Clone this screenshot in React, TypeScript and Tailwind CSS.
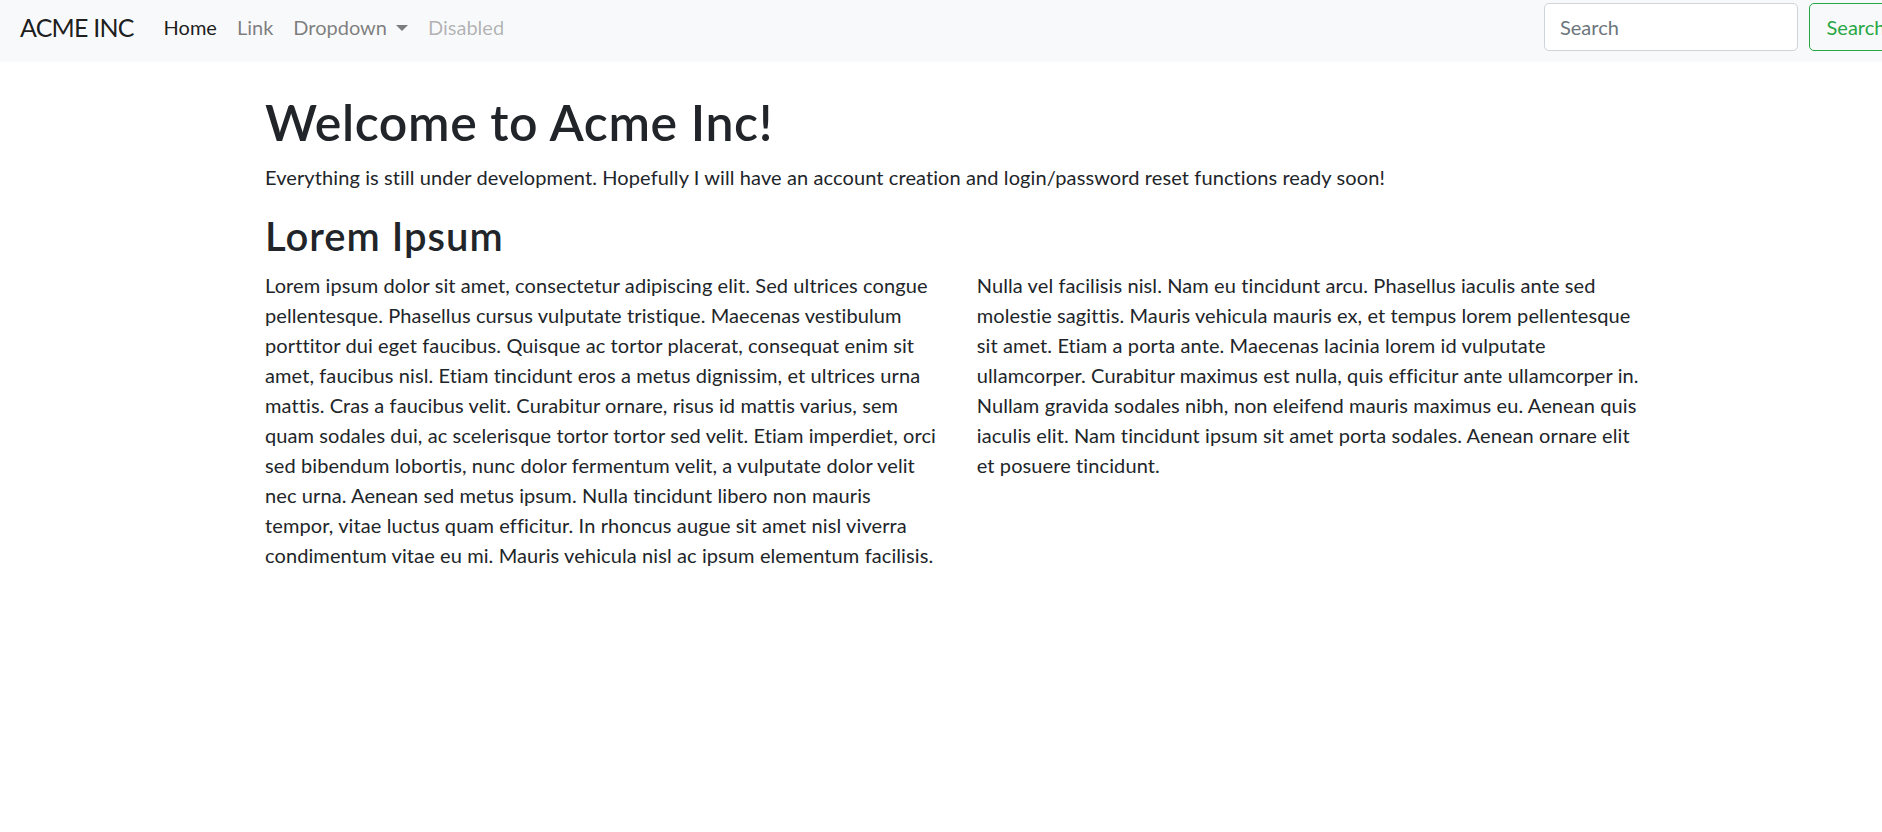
import React from "react";

const LEFT = [
  "Lorem ipsum dolor sit amet, consectetur adipiscing elit. Sed ultrices congue",
  "pellentesque. Phasellus cursus vulputate tristique. Maecenas vestibulum",
  "porttitor dui eget faucibus. Quisque ac tortor placerat, consequat enim sit",
  "amet, faucibus nisl. Etiam tincidunt eros a metus dignissim, et ultrices urna",
  "mattis. Cras a faucibus velit. Curabitur ornare, risus id mattis varius, sem",
  "quam sodales dui, ac scelerisque tortor tortor sed velit. Etiam imperdiet, orci",
  "sed bibendum lobortis, nunc dolor fermentum velit, a vulputate dolor velit",
  "nec urna. Aenean sed metus ipsum. Nulla tincidunt libero non mauris",
  "tempor, vitae luctus quam efficitur. In rhoncus augue sit amet nisl viverra",
  "condimentum vitae eu mi. Mauris vehicula nisl ac ipsum elementum facilisis.",
];

const RIGHT = [
  "Nulla vel facilisis nisl. Nam eu tincidunt arcu. Phasellus iaculis ante sed",
  "molestie sagittis. Mauris vehicula mauris ex, et tempus lorem pellentesque",
  "sit amet. Etiam a porta ante. Maecenas lacinia lorem id vulputate",
  "ullamcorper. Curabitur maximus est nulla, quis efficitur ante ullamcorper in.",
  "Nullam gravida sodales nibh, non eleifend mauris maximus eu. Aenean quis",
  "iaculis elit. Nam tincidunt ipsum sit amet porta sodales. Aenean ornare elit",
  "et posuere tincidunt.",
];

function Lines({ lines }: { lines: string[] }) {
  return (
    <p className="whitespace-nowrap">
      {lines.map((l, i) => (
        <React.Fragment key={i}>
          {l}
          {i < lines.length - 1 && <br />}
        </React.Fragment>
      ))}
    </p>
  );
}

export default function App() {
  return (
    <div className="min-h-screen w-full overflow-hidden bg-white text-[#212529] font-['Lato',sans-serif] [font-variant-ligatures:none]">
      <div className="w-[1916px]">
        <nav className="flex h-[62px] items-start bg-[#f8f9fa] pl-[20px] pr-[13px]">
          <a className="mt-[9px] mr-[20px] text-[25px] leading-[37.5px] tracking-[-0.8px] text-black/90">ACME INC</a>
          <ul className="mt-[12px] flex text-[20px] leading-[30px]">
            <li>
              <a className="block px-[10px] text-black/90">Home</a>
            </li>
            <li>
              <a className="block px-[10px] text-black/50">Link</a>
            </li>
            <li>
              <a className="flex items-center px-[10px] text-black/50">
                Dropdown
                <span className="ml-[9px] mt-[1px] h-0 w-0 border-x-[6px] border-t-[6px] border-x-transparent border-t-black/50" />
              </a>
            </li>
            <li>
              <a className="block px-[10px] text-black/30">Disabled</a>
            </li>
          </ul>
          <form className="ml-auto mt-[3px] flex">
            <input
              placeholder="Search"
              className="mr-[11px] h-[47.5px] w-[254px] rounded-[5px] border border-[#ced4da] bg-white px-[15px] text-[20px] text-[#495057] outline-none placeholder:text-[#6c757d]"
            />
            <button
              type="button"
              className="h-[47.5px] w-[94px] rounded-[5px] border border-[#28a745] text-[20px] text-[#28a745]"
            >
              Search
            </button>
          </form>
        </nav>

        <main className="mx-auto mt-[30px] w-[1425px] px-[19.5px]">
          <h1 className="mb-[10px] text-[50px] font-semibold leading-[60px] tracking-[0.6px]">Welcome to Acme Inc!</h1>
          <p className="mb-[20px] text-[20px] leading-[30px] tracking-[0.1px]">
            Everything is still under development. Hopefully I will have an account creation and login/password reset
            functions ready soon!
          </p>
          <h2 className="mb-[10px] text-[40px] font-semibold leading-[48px] tracking-[1px]">Lorem Ipsum</h2>
          <div className="grid grid-cols-2 gap-x-[37.5px] text-[20px] leading-[30px] tracking-[0.1px]">
            <Lines lines={LEFT} />
            <Lines lines={RIGHT} />
          </div>
        </main>
      </div>
    </div>
  );
}
